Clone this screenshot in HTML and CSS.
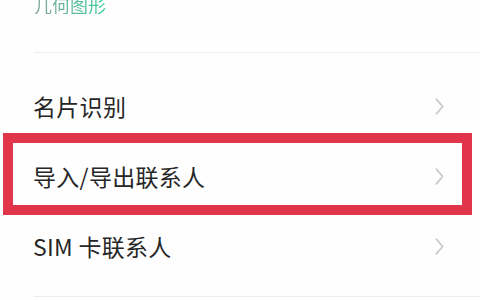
FILE: index.html
```html
<html>
<head>
	<meta charset="utf-8">
	<link rel="stylesheet" href="styles.css">
</head>
<body>
	<div class="page">
		<div class="top-section">
			<div class="sub-title">几何图形</div>
		</div>

		<div class="menu">
			<div class="row">
				<span class="label">名片识别</span>
				<svg class="arrow" viewBox="0 0 10 18"><path d="M2 2 L8 9 L2 16" /></svg>
			</div>
			<div class="row marked">
				<span class="label">导入/导出联系人</span>
				<svg class="arrow" viewBox="0 0 10 18"><path d="M2 2 L8 9 L2 16" /></svg>
				<div class="mark-box"></div>
			</div>
			<div class="row">
				<span class="label">SIM 卡联系人</span>
				<svg class="arrow" viewBox="0 0 10 18"><path d="M2 2 L8 9 L2 16" /></svg>
			</div>
		</div>
		<div class="divider bottom"></div>
	</div>
</body>
</html>
```
FILE: styles.css
```css
html, body {
	margin: 0;
	padding: 0;
	background: #fefefe;
	overflow: hidden;
}

.page {
	width: 480px;
	height: 300px;
	font-family: "Noto Sans CJK SC", "Liberation Sans", sans-serif;
	color: #222;
}

.top-section {
	display: flow-root;
	height: 52px;
	border-bottom: 1px solid #ededed;
	margin-left: 34px;
}

.sub-title {
	display: inline-block;
	font-size: 18px;
	line-height: 18px;
	margin-top: -4px;
	background: linear-gradient(90deg, #8aa99c, #38cc9e);
	-webkit-background-clip: text;
	color: transparent;
}

.menu {
	margin-top: 18px;
}

.row {
	height: 70px;
	display: flex;
	align-items: center;
	justify-content: space-between;
	padding-left: 33px;
	padding-right: 35px;
	position: relative;
}

.label {
	font-size: 23px;
	letter-spacing: 0.3px;
	color: #262626;
}

.arrow {
	width: 11px;
	height: 19px;
}

.arrow path {
	fill: none;
	stroke: #c9c9c9;
	stroke-width: 1.6;
	stroke-linecap: round;
	stroke-linejoin: round;
}

.mark-box {
	position: absolute;
	left: 3px;
	right: 8px;
	top: -8px;
	bottom: -4px;
	border: 10px solid #e0354b;
}

.divider.bottom {
	margin-top: 15px;
	margin-left: 34px;
	border-top: 1px solid #ededed;
}
```
